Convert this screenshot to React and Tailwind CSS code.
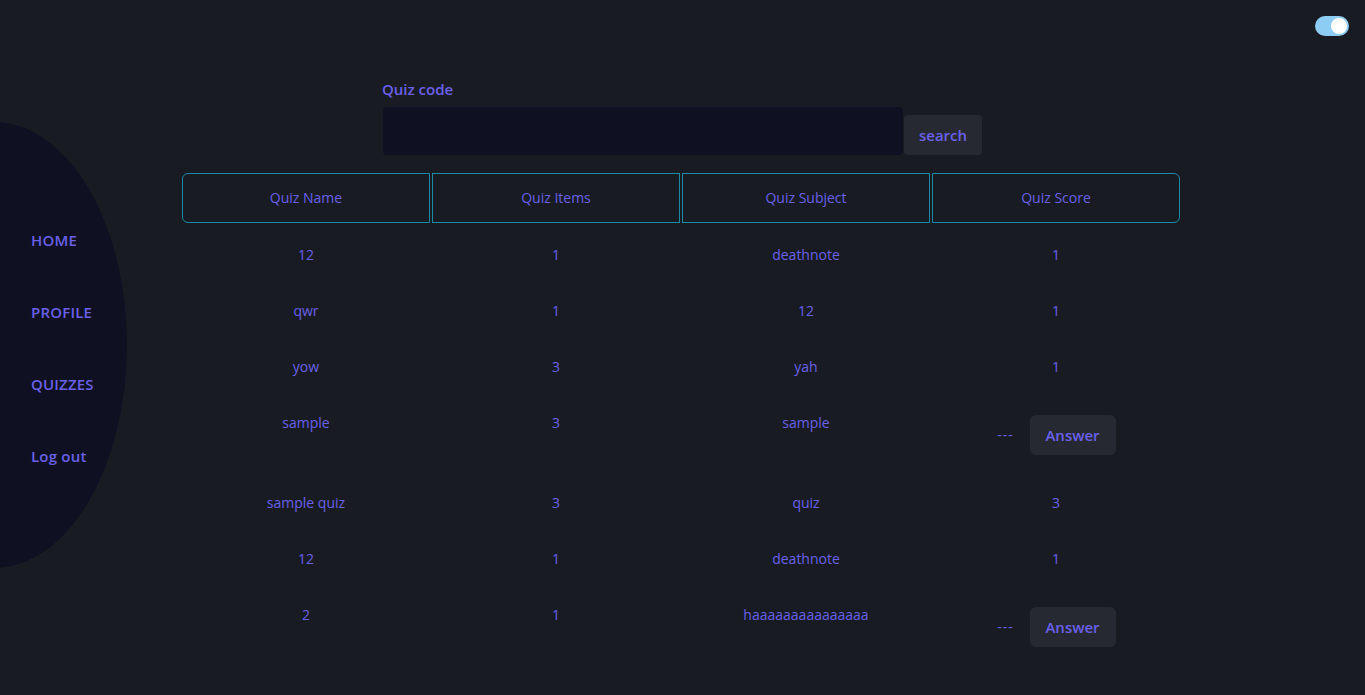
import React from "react";

const rows = [
  { name: "12", items: "1", subject: "deathnote", score: "1" },
  { name: "qwr", items: "1", subject: "12", score: "1" },
  { name: "yow", items: "3", subject: "yah", score: "1" },
  { name: "sample", items: "3", subject: "sample", score: null },
  { name: "sample quiz", items: "3", subject: "quiz", score: "3" },
  { name: "12", items: "1", subject: "deathnote", score: "1" },
  { name: "2", items: "1", subject: "haaaaaaaaaaaaaaa", score: null },
];

export default function App() {
  return (
    <div
      className="relative min-h-[695px] w-full overflow-hidden bg-[#191b23] text-[#6a60e9]"
      style={{ fontFamily: '"Open Sans", "Noto Sans", sans-serif' }}
    >
      {/* sidebar ellipse */}
      <div className="absolute left-[-140px] top-[122px] flex h-[446px] w-[267px] items-center rounded-[50%] bg-[#0f1021]">
        <nav className="ml-[171px] mt-[6px] flex flex-col gap-[52px] text-[15px] font-semibold leading-5 tracking-[0.2px]">
          <a>HOME</a>
          <a>PROFILE</a>
          <a>QUIZZES</a>
          <a>Log out</a>
        </nav>
      </div>

      {/* toggle */}
      <div className="flex justify-end px-4 pt-4">
        <div className="flex h-5 w-[34px] items-center justify-end rounded-full bg-[#8ecdf3] px-[2px]">
          <div className="h-4 w-4 rounded-full bg-white" />
        </div>
      </div>

      <div className="relative mx-auto mt-[43px] w-[601px]">
        <div className="text-[15px] font-semibold leading-5">Quiz code</div>
        <div className="mt-[8px] flex items-end">
          <div className="ml-px h-12 w-[520px] rounded bg-[#0f1022]" />
          <button className="ml-px h-10 w-[78px] rounded bg-[#272932] text-[15px] font-semibold text-[#6a60e9]">
            search
          </button>
        </div>
      </div>

      <div className="relative flex justify-center pt-4">
        <table className="mr-[4px] border-separate border-spacing-[2px] text-sm">
          <thead>
            <tr>
              {["Quiz Name", "Quiz Items", "Quiz Subject", "Quiz Score"].map((h, i) => (
                <th
                  key={h}
                  className={
                    "h-[50px] w-[248px] border border-[#1b8aa5] pl-px font-normal " +
                    (i === 0 ? "rounded-l-md " : "") +
                    (i === 3 ? "rounded-r-md" : "")
                  }
                >
                  {h}
                </th>
              ))}
            </tr>
          </thead>
          <tbody>
            {rows.map((r, i) => (
              <tr key={i}>
                <td className="pb-[14px] pl-px pt-5 text-center align-top leading-5">{r.name}</td>
                <td className="pb-[14px] pl-px pt-5 text-center align-top leading-5">{r.items}</td>
                <td className="pb-[14px] pl-px pt-5 text-center align-top leading-5">{r.subject}</td>
                <td className="pb-[14px] pl-px pt-5 text-center align-top leading-5">
                  {r.score !== null ? (
                    r.score
                  ) : (
                    <div className="mb-[2px] mt-0.5 flex items-center justify-center gap-[15px]">
                      <span className="w-[18px] text-center tracking-[1px]">---</span>
                      <button className="h-10 w-[86px] rounded-md bg-[#272932] text-[15px] font-semibold text-[#6a60e9]">
                        Answer
                      </button>
                    </div>
                  )}
                </td>
              </tr>
            ))}
          </tbody>
        </table>
      </div>
    </div>
  );
}
